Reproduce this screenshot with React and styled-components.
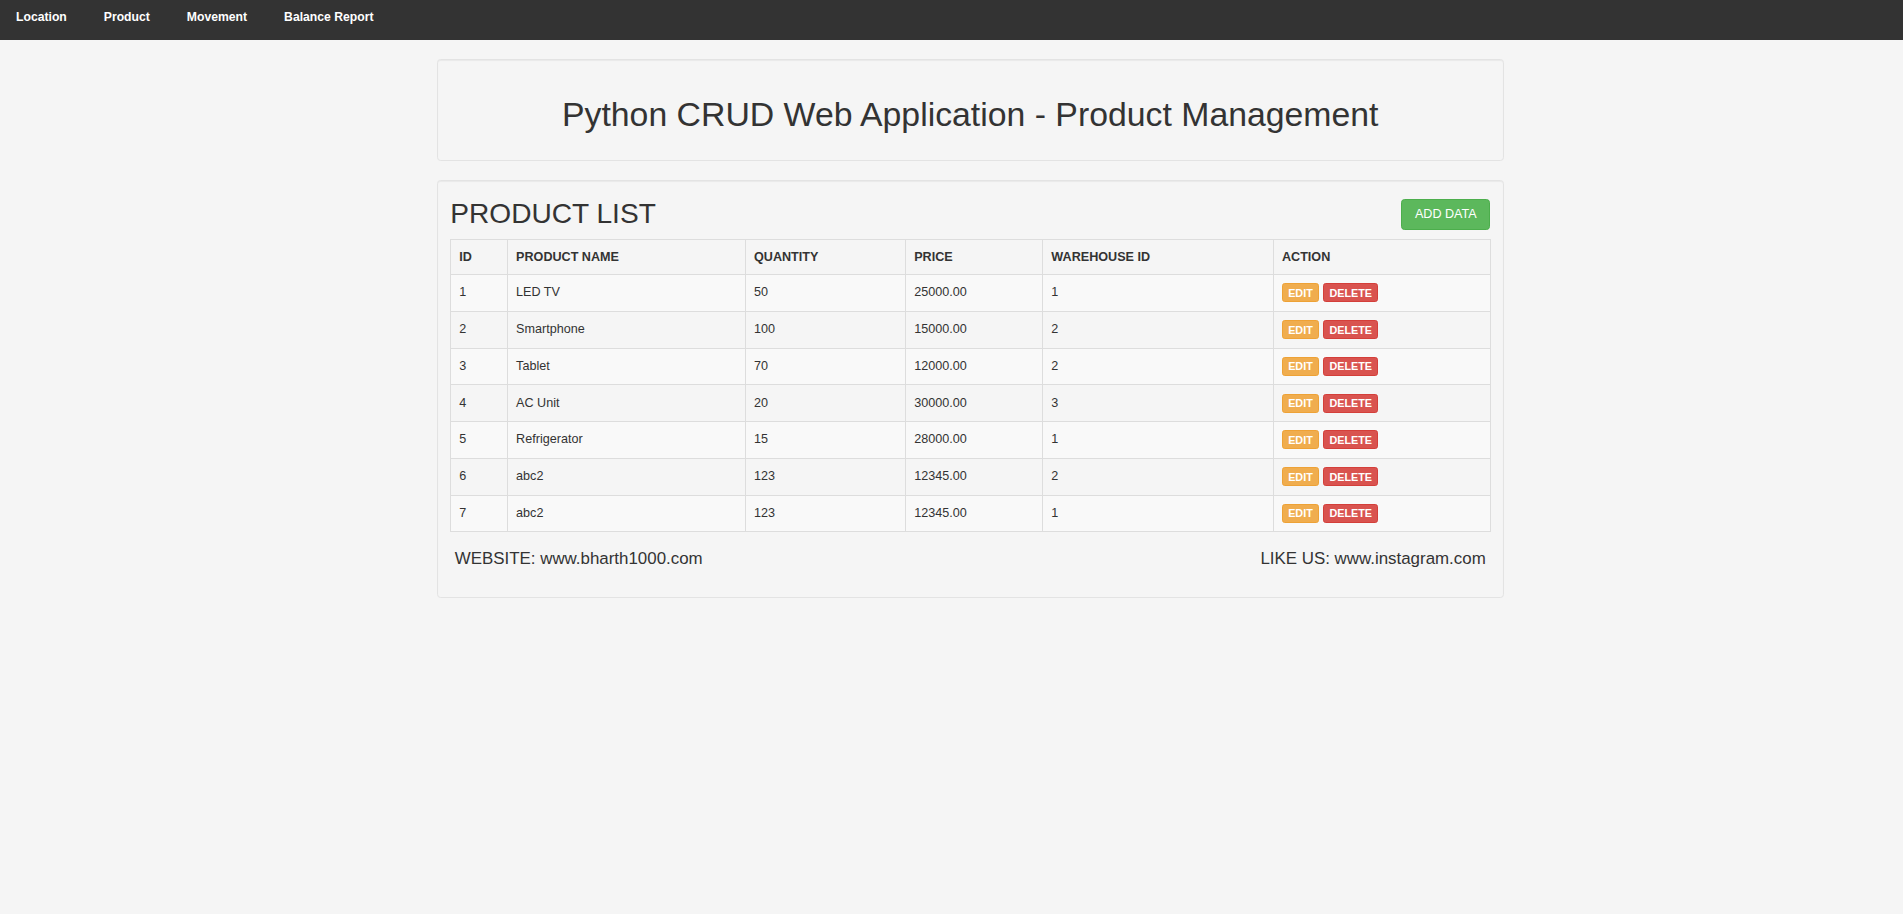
import React from 'react';
import styled, { createGlobalStyle } from 'styled-components';

const GlobalStyle = createGlobalStyle`
	html, body {
		margin: 0;
		padding: 0;
		background: #f5f5f5;
		font-family: "Liberation Sans", Arial, Helvetica, sans-serif;
		color: #333;
	}
	* {
		box-sizing: border-box;
	}
`;

const products = [
	{ id: 1, name: 'LED TV', qty: 50, price: '25000.00', warehouse: 1 },
	{ id: 2, name: 'Smartphone', qty: 100, price: '15000.00', warehouse: 2 },
	{ id: 3, name: 'Tablet', qty: 70, price: '12000.00', warehouse: 2 },
	{ id: 4, name: 'AC Unit', qty: 20, price: '30000.00', warehouse: 3 },
	{ id: 5, name: 'Refrigerator', qty: 15, price: '28000.00', warehouse: 1 },
	{ id: 6, name: 'abc2', qty: 123, price: '12345.00', warehouse: 2 },
	{ id: 7, name: 'abc2', qty: 123, price: '12345.00', warehouse: 1 }
];

const columns = [
	{ label: 'ID', width: 56.8 },
	{ label: 'PRODUCT NAME', width: 237.9 },
	{ label: 'QUANTITY', width: 160.2 },
	{ label: 'PRICE', width: 137.2 },
	{ label: 'WAREHOUSE ID', width: 230.6 },
	{ label: 'ACTION', width: 217.2 }
];

const navLinks = ['Location', 'Product', 'Movement', 'Balance Report'];

export default function App() {
	return (
		<>
			<GlobalStyle />
			<NavBar>
				{navLinks.map((link) => (
					<NavLink key={link} href="#">
						{link}
					</NavLink>
				))}
			</NavBar>
			<Container>
				<Well header>
					<Title>Python CRUD Web Application - Product Management</Title>
				</Well>
				<Well>
					<ListHeader>
						<Heading>PRODUCT LIST</Heading>
						<Button color="green">ADD DATA</Button>
					</ListHeader>
					<Table>
						<colgroup>
							{columns.map((c) => (
								<col key={c.label} style={{ width: c.width }} />
							))}
						</colgroup>
						<thead>
							<tr>
								{columns.map((c) => (
									<Th key={c.label}>{c.label}</Th>
								))}
							</tr>
						</thead>
						<tbody>
							{products.map((p) => (
								<Row key={p.id}>
									<Td>{p.id}</Td>
									<Td>{p.name}</Td>
									<Td>{p.qty}</Td>
									<Td>{p.price}</Td>
									<Td>{p.warehouse}</Td>
									<Td>
										<Actions>
											<SmallButton color="orange">EDIT</SmallButton>
											<SmallButton color="red">DELETE</SmallButton>
										</Actions>
									</Td>
								</Row>
							))}
						</tbody>
					</Table>
					<Footer>
						<span>WEBSITE: www.bharth1000.com</span>
						<span>LIKE US: www.instagram.com</span>
					</Footer>
				</Well>
			</Container>
		</>
	);
}

const NavBar = styled.nav`
	display: flex;
	align-items: flex-start;
	gap: 37px;
	height: 40px;
	padding: 9px 0 0 16px;
	background-color: #333;
`;

const NavLink = styled.a`
	color: #fff;
	font-size: 12.2px;
	font-weight: 700;
	line-height: 16px;
	text-decoration: none;
`;

const Container = styled.main`
	width: 1067.5px;
	margin: 19px 0 0 436.5px;
`;

const Well = styled.section`
	background-color: #f5f5f5;
	border: 1px solid #e3e3e3;
	border-radius: 3.6px;
	box-shadow: inset 0 1px 1px rgba(0, 0, 0, 0.05);
	margin-bottom: 18.5px;
	${(props) =>
		props.header
			? `height: 102px; padding: 36px 13px 0; text-align: center;`
			: `padding: 14px 12.8px 0; height: 418px;`};
`;

const Title = styled.h1`
	margin: 0;
	font-size: 33.8px;
	font-weight: 400;
	line-height: 37px;
	color: #333;
`;

const ListHeader = styled.div`
	display: flex;
	justify-content: space-between;
	align-items: flex-start;
	height: 44px;
	padding-top: 4px;
`;

const Heading = styled.h2`
	margin: 0;
	font-size: 28.1px;
	font-weight: 400;
	line-height: 30px;
	color: #333;
`;

const palette = {
	green: { bg: '#5cb85c', border: '#4cae4c' },
	orange: { bg: '#f0ad4e', border: '#eea236' },
	red: { bg: '#d9534f', border: '#d43f3a' }
};

const Button = styled.button`
	display: inline-flex;
	align-items: center;
	justify-content: center;
	height: 31.4px;
	padding: 0 12.5px;
	font-family: inherit;
	font-size: 12.6px;
	color: #fff;
	background-color: ${(props) => palette[props.color].bg};
	border: 1px solid ${(props) => palette[props.color].border};
	border-radius: 3.6px;
	cursor: pointer;
`;

const SmallButton = styled(Button)`
	height: 19px;
	padding: 0 5.2px;
	font-size: 10.8px;
	font-weight: 700;
	border-radius: 2.7px;
`;

const Table = styled.table`
	width: 1040px;
	table-layout: fixed;
	border-collapse: collapse;
	border: 1px solid #ddd;
	font-size: 12.6px;
	line-height: 18px;
`;

const Th = styled.th`
	padding: 8.3px 8px 8.3px;
	text-align: left;
	font-weight: 700;
	vertical-align: bottom;
	border: 1px solid #ddd;
`;

const Row = styled.tr`
	&:nth-child(odd) {
		background-color: #f9f9f9;
	}
`;

const Td = styled.td`
	padding: 8.2px 8px 6.2px;
	vertical-align: top;
	border: 1px solid #ddd;
	height: 36.76px;
`;

const Actions = styled.div`
	display: flex;
	gap: 4.3px;
	height: 21.4px;
`;

const Footer = styled.div`
	display: flex;
	justify-content: space-between;
	margin-top: 18px;
	padding: 0 4.5px;
	font-size: 16.9px;
	line-height: 18.2px;
	color: #333;
`;
